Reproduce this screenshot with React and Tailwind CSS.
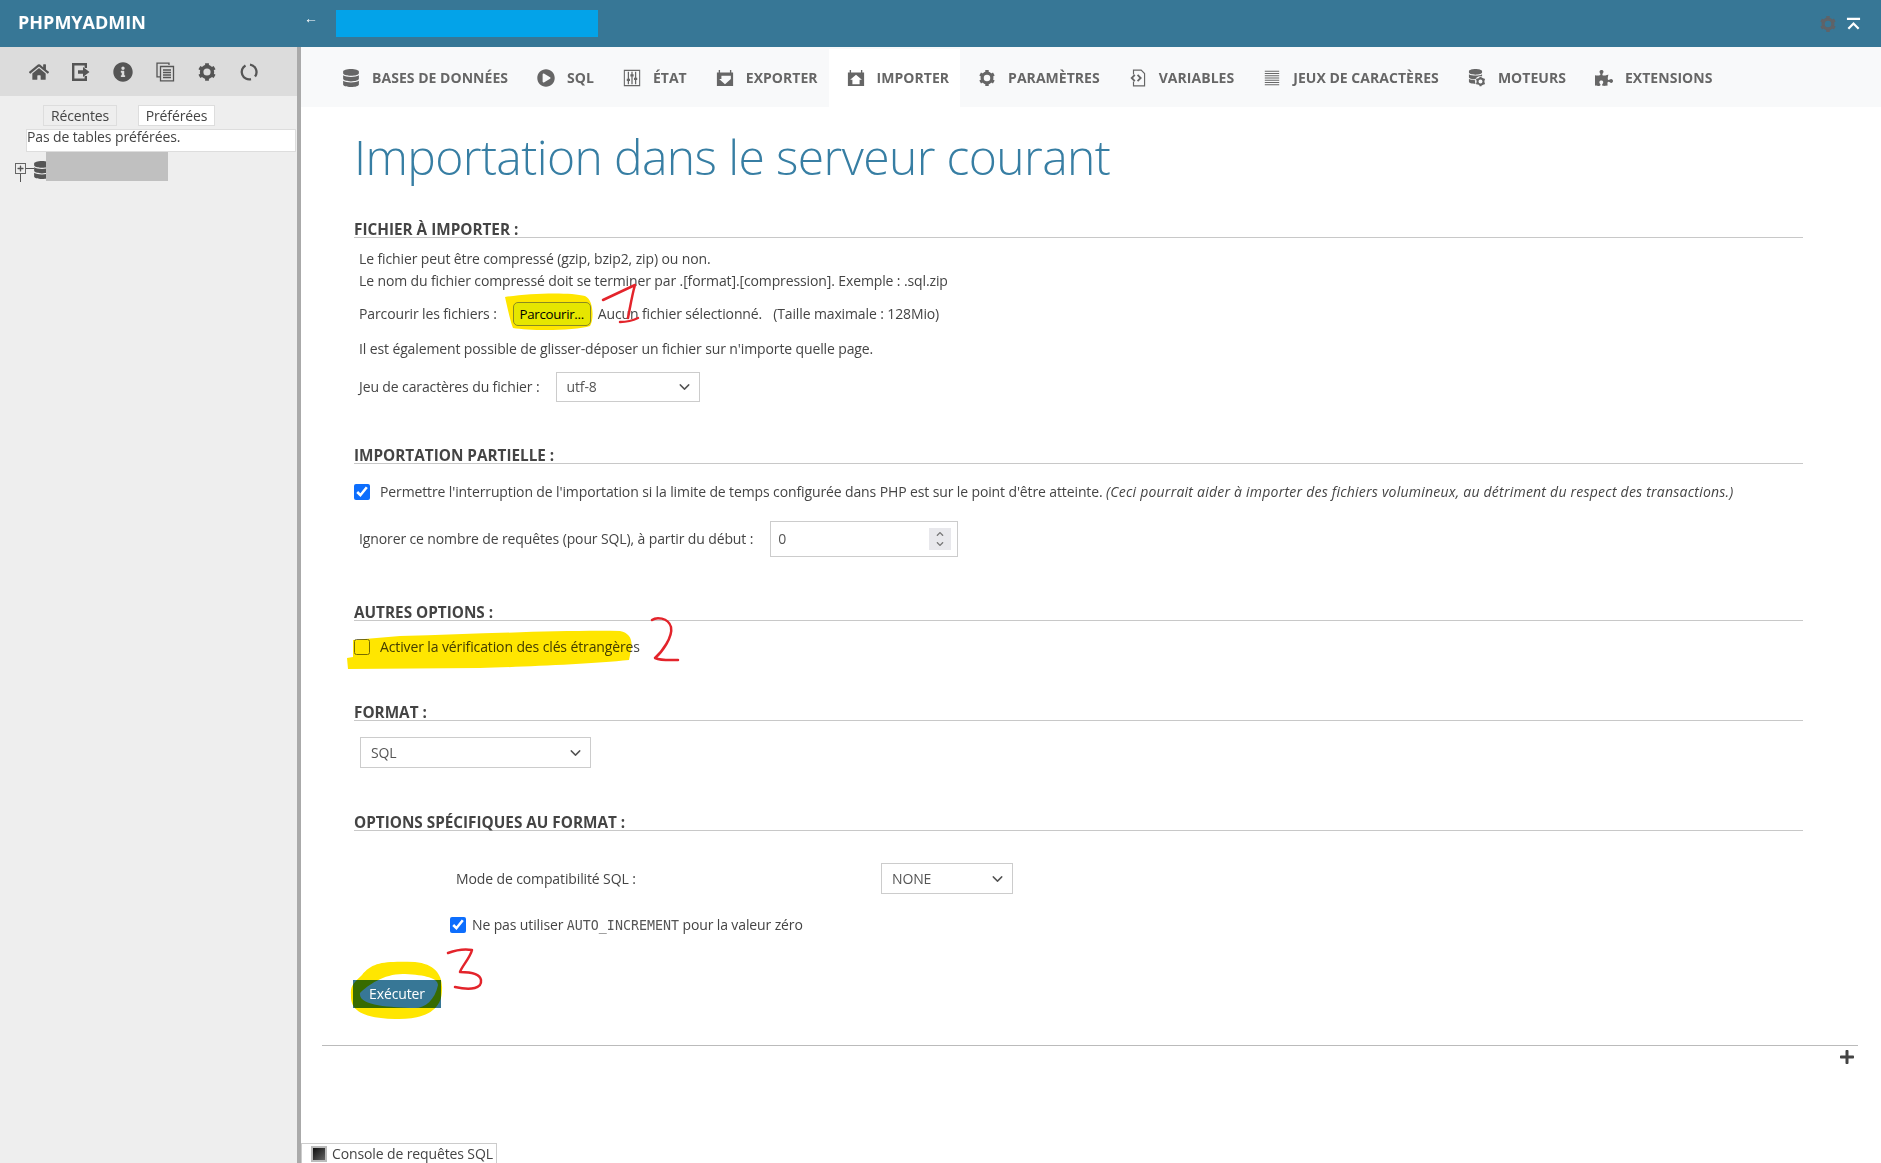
import { FaHome, FaInfoCircle, FaDatabase, FaPlayCircle, FaPuzzlePiece, FaChevronUp, FaChevronDown, FaPlus } from "react-icons/fa";
import { ChevronDown } from "lucide-react";

const Gear = ({ className }) => (
  <svg viewBox="0 0 20 20" className={className} fill="none" stroke="currentColor">
    <circle cx="10" cy="10" r="5.400" strokeWidth="3.600" />
    <path d="M10 1.200v3M10 15.800v3M2.400 5.600l2.600 1.500M15 12.900l2.600 1.500M2.400 14.400 5 12.900M15 7.100l2.600-1.500" strokeWidth="3.800" />
  </svg>
);

const Logout = ({ className }) => (
  <svg viewBox="0 0 20 20" className={className} fill="currentColor">
    <path d="M1 1h15v5h-2.400V3.400H3.400v13.200h10.200V14H16v5H1z" />
    <path d="M7 8.200h5V5l6.500 5-6.500 5v-3.200H7z" />
  </svg>
);

const Docs = ({ className }) => (
  <svg viewBox="0 0 20 20" className={className} fill="none" stroke="currentColor" strokeWidth="1.300">
    <path d="M14 3V1.200H2v13.600h3" />
    <path d="M5.500 4.500h13v14.300h-13z" />
    <path d="M8 8h8M8 10.500h8M8 13h8M8 15.500h8" />
  </svg>
);

const Reload = ({ className }) => (
  <svg viewBox="0 0 20 20" className={className} fill="none" stroke="currentColor" strokeWidth="2.300">
    <path d="M11 2.600A7.500 7.500 0 0 1 16 14.500" />
    <path d="M12 17.200A7.500 7.500 0 0 1 6.500 3.400" />
  </svg>
);

const Sliders = ({ className }) => (
  <svg viewBox="0 0 20 20" className={className} fill="none" stroke="currentColor" strokeWidth="1.200">
    <path d="M1.500 1.500h17v17h-17z" />
    <path d="M6 3v14M10 3v14M14 3v14" strokeWidth="1.400" />
    <path d="M4.200 12h3.600M8.200 7h3.600M12.200 11h3.600" strokeWidth="2.400" />
  </svg>
);

const ExportBox = ({ className }) => (
  <svg viewBox="0 0 20 20" className={className} fill="currentColor">
    <path d="M1 4h2V1h1.500v3h11V1H17v3h2v15H1zM6 7.500v3.500H3.500L10 17l6.500-6V7.500z" fillRule="evenodd" />
  </svg>
);

const ImportBox = ({ className }) => (
  <svg viewBox="0 0 20 20" className={className} fill="currentColor">
    <path d="M1 4h2V1h1.500v3h11V1H17v3h2v15H1zM10 6.500 3.500 12H6v5h8v-5h2.500z" fillRule="evenodd" />
  </svg>
);

const VariablesIcon = ({ className }) => (
  <svg viewBox="0 0 20 20" className={className} fill="none" stroke="currentColor" strokeWidth="1.300">
    <path d="M5 6V1.200h8.500l3.800 3.800v13.800H5V14" />
    <path d="M6.500 6.500 3 10l3.500 3.500" strokeWidth="2" />
    <path d="M9.500 6.500 13 10l-3.500 3.500" strokeWidth="2" />
  </svg>
);

const Lines = ({ className }) => (
  <svg viewBox="0 0 20 20" className={className} fill="none" stroke="currentColor" strokeWidth="1.100">
    <path d="M2 2.500h16M2 5h16M2 7.500h16M2 10h16M2 12.500h16M2 15h16M2 17.500h16" />
  </svg>
);

const Engines = ({ className }) => (
  <span className={`relative inline-block ${className}`}>
    <FaDatabase className="absolute left-0 top-0 size-[15px]" />
    <Gear className="absolute right-0 bottom-0 size-[11px] bg-[#f8f9fa] rounded-full" />
  </span>
);

const navItems = [
  { label: "Bases de données", Icon: FaDatabase },
  { label: "SQL", Icon: FaPlayCircle },
  { label: "État", Icon: Sliders },
  { label: "Exporter", Icon: ExportBox },
  { label: "Importer", Icon: ImportBox, active: true },
  { label: "Paramètres", Icon: Gear },
  { label: "Variables", Icon: VariablesIcon },
  { label: "Jeux de caractères", Icon: Lines },
  { label: "Moteurs", Icon: Engines },
  { label: "Extensions", Icon: FaPuzzlePiece },
];

function SectionTitle({ className = "", children }) {
  return (
    <h2 className={`h-[20px] border-b border-[#c8c8c8] text-[15.300px] leading-[23px] font-bold uppercase tracking-normal text-[#444] ${className}`}>
      {children}
    </h2>
  );
}

function Select({ className = "", value }) {
  return (
    <div className={`relative ${className}`}>
      <select className="h-full w-full appearance-none border border-[#ccc] bg-white pl-[10px] text-[#555]" defaultValue={value}>
        <option>{value}</option>
      </select>
      <ChevronDown className="pointer-events-none absolute right-[7px] top-1/2 size-[17px] -translate-y-1/2 text-[#555]" />
    </div>
  );
}

export default function App() {
  return (
    <div className="relative h-[1163px] overflow-hidden bg-white font-['Open_Sans',sans-serif] text-[14px] leading-[22px] tracking-[-0.120px] text-[#444]">
      <header className="flex h-[47px] items-center bg-[#377796] text-white">
        <div className="w-[301px] pl-[18px] pb-[3px] text-[18px] font-bold tracking-normal">PHPMYADMIN</div>
        <span className="-mt-[11px] ml-[3px] text-[14px] leading-none">←</span>
        <div className="ml-[18px] h-[27px] w-[262px] bg-[#03a3e9]"></div>
        <div className="ml-auto mr-[20px] flex items-center gap-[9px]">
          <Gear className="size-[18px] text-[#5f6368]" />
          <svg viewBox="0 0 16 14" className="h-[14px] w-[15px]" fill="none" stroke="white" strokeWidth="2.400">
            <path d="M1 1.500h14M2.500 12 8 6.500l5.500 5.500" />
          </svg>
        </div>
      </header>

      <div className="flex h-[1116px]">
        <aside className="w-[301px] shrink-0 border-r-[4px] border-[#aaa] bg-[#eee]">
          <div className="flex h-[49px] items-center bg-[#dcdcdc] pl-[29px] gap-[22px] text-[#555]">
            <FaHome className="size-[20px]" />
            <Logout className="size-[20px]" />
            <FaInfoCircle className="size-[20px]" />
            <Docs className="size-[20px]" />
            <Gear className="size-[20px]" />
            <Reload className="size-[20px]" />
          </div>
          <div className="mt-[9px] flex pl-[43px] gap-[21px]">
            <div className="flex h-[21px] w-[74px] items-center justify-center border border-[#ddd] bg-[#eee]">Récentes</div>
            <div className="flex h-[21px] w-[77px] items-center justify-center border border-[#ddd] bg-white">Préférées</div>
          </div>
          <div className="ml-[26px] mt-[3px] h-[23px] w-[270px] border border-[#ddd] bg-white leading-[14px]">Pas de tables préférées.</div>
          <div className="relative h-[29px]">
            <div className="absolute left-[15px] top-[11px] flex size-[11px] items-center justify-center border border-[#666] bg-[#eee] text-[#555]">
              <FaPlus className="size-[7px]" />
            </div>
            <div className="absolute left-[20px] top-[22px] h-[8px] w-px bg-[#555]"></div>
            <div className="absolute left-[26px] top-[16px] h-px w-[8px] bg-[#555]"></div>
            <FaDatabase className="absolute left-[33px] top-[9px] size-[18px] text-[#555]" />
            <div className="absolute left-[46px] top-0 h-[29px] w-[122px] bg-[#c0c0c0]"></div>
          </div>
        </aside>

        <main className="relative min-w-0 flex-1">
          <nav className="flex h-[60px] bg-[#f8f9fa] pl-[23px] pt-[2px] text-[14px] font-bold uppercase tracking-[0.035px] text-[#666]">
            {navItems.map(({ label, Icon, active }) => (
              <div key={label} className={`flex items-center gap-[12px] pl-[18px] pr-[11px] ${active ? "bg-white" : ""}`}>
                <Icon className="size-[18px] shrink-0" />
                <span className="whitespace-nowrap">{label}</span>
              </div>
            ))}
          </nav>

          <div className="pl-[53px] pr-[78px]">
            <h1 className="mt-[17px] h-[66px] whitespace-nowrap text-[48px] font-light leading-[66px] tracking-[-0.600px] text-[#377ea3]">
              Importation dans le serveur courant
            </h1>

            <SectionTitle className="mt-[28px]">Fichier à importer :</SectionTitle>
            <div className="pl-[5px]">
              <p className="mt-[10px]">Le fichier peut être compressé (gzip, bzip2, zip) ou non.</p>
              <p>Le nom du fichier compressé doit se terminer par .[format].[compression]. Exemple : .sql.zip</p>
              <div className="mt-[10px] flex h-[24px] items-center">
                <span>Parcourir les fichiers :</span>
                <button className="relative z-10 ml-[16px] h-[24px] w-[78px] rounded-[5px] border border-[#8a8a20] bg-[#e6e600] text-[13.300px] tracking-[-0.300px] text-black">Parcourir...</button>
                <span className="ml-[7px]">Aucun fichier sélectionné.</span>
                <span className="ml-[11px]">(Taille maximale : 128Mio)</span>
              </div>
              <p className="mt-[12px]">Il est également possible de glisser-déposer un fichier sur n'importe quelle page.</p>
              <div className="mt-[12px] flex items-center">
                <span>Jeu de caractères du fichier :</span>
                <Select className="ml-[16px] h-[30px] w-[144px]" value="utf-8" />
              </div>
            </div>

            <SectionTitle className="mt-[42px]">Importation partielle :</SectionTitle>
            <label className="mt-[17px] flex h-[22px] items-center">
              <input type="checkbox" defaultChecked className="size-[16px] accent-[#0d6efd]" />
              <span className="ml-[10px] whitespace-nowrap">
                Permettre l'interruption de l'importation si la limite de temps configurée dans PHP est sur le point d'être atteinte.{" "}
                <em className="tracking-[0.230px]">(Ceci pourrait aider à importer des fichiers volumineux, au détriment du respect des transactions.)</em>
              </span>
            </label>
            <div className="mt-[18px] flex items-center pl-[5px]">
              <span>Ignorer ce nombre de requêtes (pour SQL), à partir du début :</span>
              <div className="ml-[17px] flex h-[36px] w-[188px] items-center justify-between border border-[#ccc] pl-[7px] pr-[6px] text-[#555]">
                <span>0</span>
                <div className="flex h-[22px] w-[22px] flex-col items-center justify-center gap-[2px] bg-[#e8e8ec] text-[#777]">
                  <FaChevronUp className="size-[8px]" />
                  <FaChevronDown className="size-[8px]" />
                </div>
              </div>
            </div>

            <SectionTitle className="mt-[44px]">Autres options :</SectionTitle>
            <label className="mt-[15px] flex h-[22px] items-center">
              <input type="checkbox" className="size-[16px]" />
              <span className="ml-[10px]">Activer la vérification des clés étrangères</span>
            </label>

            <SectionTitle className="mt-[43px]">Format :</SectionTitle>
            <Select className="ml-[6px] mt-[16px] h-[31px] w-[231px]" value="SQL" />

            <SectionTitle className="mt-[43px]">Options spécifiques au format :</SectionTitle>
            <div className="ml-[102px] mt-[32px] flex items-center">
              <span className="w-[425px]">Mode de compatibilité SQL :</span>
              <Select className="h-[31px] w-[132px]" value="NONE" />
            </div>
            <label className="ml-[96px] mt-[20px] flex h-[22px] items-center">
              <input type="checkbox" defaultChecked className="size-[16px] accent-[#0d6efd]" />
              <span className="ml-[6px]">
                Ne pas utiliser <code className="font-['DejaVu_Sans_Mono',monospace] text-[13.300px] tracking-normal text-[#555]">AUTO_INCREMENT</code> pour la valeur zéro
              </span>
            </label>
            <button className="-ml-[1px] mt-[44px] block h-[28px] w-[88px] bg-[#377796] text-white">Exécuter</button>
            <div className="-ml-[32px] -mr-[55px] mt-[37px] border-t border-[#bbb]"></div>
            <div className="-mr-[55px] mt-[3px] flex justify-end pr-[3px] text-[#444]">
              <FaPlus className="size-[16px]" />
            </div>
          </div>

          <div className="absolute bottom-0 left-0 flex h-[20px] w-[196px] items-center border border-b-0 border-[#ccc] bg-white pl-[9px] pt-px whitespace-nowrap">
            <span className="size-[16px] shrink-0 border-2 border-[#bbb] bg-gradient-to-br from-[#111] to-[#666]"></span>
            <span className="ml-[5px]">Console de requêtes SQL</span>
          </div>
        </main>
      </div>

      {/* highlighter marks drawn over the page */}
      <svg className="pointer-events-none absolute left-0 top-0 mix-blend-multiply" width="1881" height="1163" viewBox="0 0 1881 1163">
        <path fill="#ffe600" d="M505 297C530 293 570 292 585 296C594 300 594 320 590 326C575 331 530 331 513 328C510 320 508 310 505 297Z" />
        <path fill="#ffe600" d="M347 658L353 657L353 640L400 636C480 634 560 630 620 631C630 633 633 640 631 650L629 660C590 664 520 667 480 668L348 669Z" />
        <path fill="#ffe600" fillRule="evenodd" d="M362 975C372 962 385 961 415 962C435 964 443 975 442 990C442 1010 425 1020 395 1019C365 1018 350 1012 351 995C350 985 355 982 362 975ZM360 993C368 985 385 973 405 974C425 975 438 978 438 985C435 1000 425 1008 415 1008C390 1007 358 1006 360 993Z" />
      </svg>
      <svg className="pointer-events-none absolute left-0 top-0 z-20" width="1881" height="1163" viewBox="0 0 1881 1163" fill="none" stroke="#e3242b" strokeWidth="2.500" strokeLinecap="round" strokeLinejoin="round">
        <path d="M603 300L635 285C632 295 630 308 628 318M620 322C626 322 632 321 638 318" />
        <path d="M652 620C656 617 668 617 671 627C673 637 662 652 655 658C662 661 672 660 678 660" />
        <path d="M448 953C456 950 466 949 472 950C470 958 462 966 460 972C470 972 480 974 481 980C482 988 472 991 455 987" />
      </svg>
    </div>
  );
}
